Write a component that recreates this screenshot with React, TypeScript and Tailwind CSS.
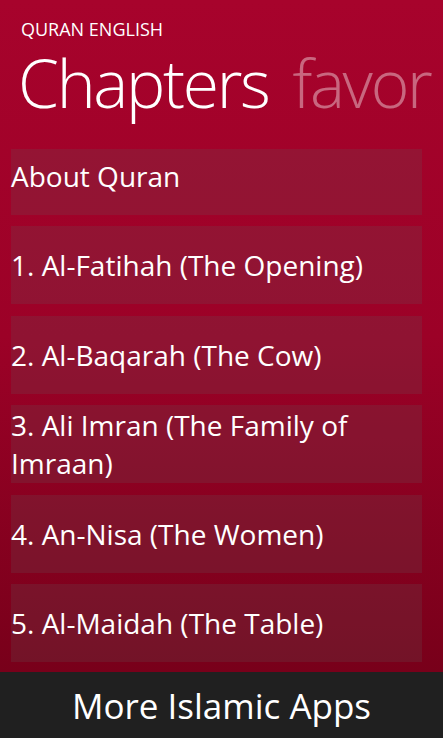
import * as React from 'react';

const chapters = [
  { title: '1. Al-Fatihah (The Opening)', gap: 'mt-[11px]' },
  { title: '2. Al-Baqarah (The Cow)', gap: 'mt-[12px]' },
  { title: '3. Ali Imran (The Family of Imraan)', gap: 'mt-[11px]' },
  { title: '4. An-Nisa (The Women)', gap: 'mt-[12px]' },
  { title: '5. Al-Maidah (The Table)', gap: 'mt-[11px]' },
];

const itemClass = 'w-[411px] ml-[11px] bg-[#606060]/20 text-white text-[28px] leading-[38px]';

export default function App() {
  return (
    <div
      className="w-[443px] h-[738px] flex flex-col overflow-hidden bg-[#202020]"
      style={{ fontFamily: '"Open Sans", "Noto Sans", sans-serif' }}
    >
      <div className="flex-1 overflow-hidden bg-linear-to-b from-[#a7032c] via-[#9c0127] to-[#78001a]">
        {/* Pivot header */}
        <div className="pt-[20px] pl-[21px] text-white text-[18px] leading-none">QURAN ENGLISH</div>
        <div className="mt-[16px] pl-[18px] flex items-baseline whitespace-nowrap text-[66px] leading-[56px] font-[350] tracking-[-0.035em]">
          <span className="text-white">Chapters</span>
          <span className="ml-[24px] text-white/40">favor</span>
        </div>

        {/* List */}
        <div className="mt-[39px] flex flex-col">
          <div className={`${itemClass} h-[66px] pt-[8px]`}>About Quran</div>
          {chapters.map((c) => (
            <div key={c.title} className={`${itemClass} ${c.gap} h-[78px] flex items-center`}>
              <span>{c.title}</span>
            </div>
          ))}
        </div>
      </div>

      {/* App bar */}
      <div className="h-[66px] flex items-center justify-center bg-[#202020] text-white text-[35px] leading-none">
        More Islamic Apps
      </div>
    </div>
  );
}
